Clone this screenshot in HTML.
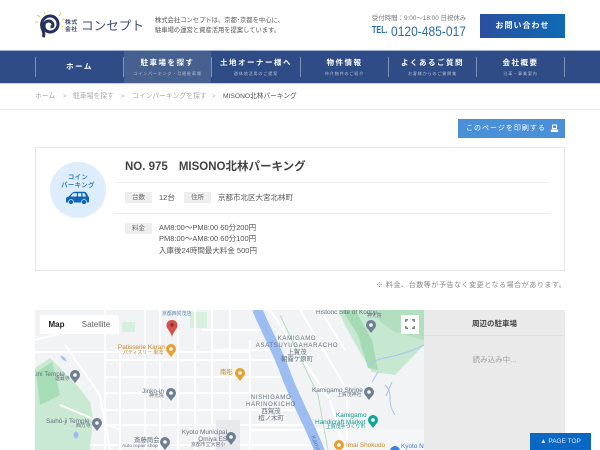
<!DOCTYPE html>
<html lang="ja">
<head>
<meta charset="utf-8">
<title>MISONO北林パーキング</title>
<style>
html,body{margin:0;padding:0;width:600px;height:450px;overflow:hidden;background:#fff}
body{position:relative;font-family:"Liberation Sans","Noto Sans CJK JP",sans-serif;color:#444}
.a{position:absolute;white-space:nowrap}
.nav{left:0;top:50px;width:600px;height:34px;background:#2f4c86;border-top:1px solid #9fb2d0;border-bottom:1px solid #c5cfdf;box-sizing:border-box}
.dv{position:absolute;top:57px;width:1px;height:20px;background:#7d92b8}
.n1{position:absolute;text-align:center;color:#fff;font-size:7.5px;font-weight:bold;letter-spacing:1.5px;line-height:10px;top:58px}
.n2{position:absolute;text-align:center;color:#b9c5da;font-size:4px;letter-spacing:.9px;line-height:5px;top:71px}
.tag{position:absolute;background:#eee;color:#666;font-size:6.5px;text-align:center;line-height:11px;height:11px;width:27px}
.t{position:absolute;font-size:7.5px;color:#555;white-space:nowrap;line-height:11px}
.m{position:absolute;white-space:nowrap;text-align:center;line-height:1.1}
.g{color:#66727f}.o{color:#c8872c}.e{color:#129a8f}
.s6{font-size:6.4px}.s5{font-size:4.9px}
.c{width:0;display:flex;justify-content:center;line-height:7px}
</style>
</head>
<body>
<!-- logo -->
<svg class="a" style="left:34px;top:11px" width="34" height="28" viewBox="0 0 34 28">
<g stroke="#ecd64c" stroke-width="1.2" fill="none"><path d="M1 11h3M3 4l3 2M10 1l1 2M27 2l-2 3M31 8l-3 1M29 16l-2-1"/></g>
<path d="M9 26C11 23 9 20 8 17C6 10 11 5 16 5C21 5 24 9 24 13C24 18 20 21 16 21C12 21 10 18 10 15C10 12 12 10 15 10C17 10 19 12 19 14C19 15.500 18 16 16.500 16" fill="none" stroke="#27305f" stroke-width="3"/>
</svg>
<div class="a" style="left:65px;top:20px;font-size:5.8px;line-height:6.5px;letter-spacing:.6px;font-weight:bold;color:#3b4a6b">株式<br>会社</div>
<div class="a" style="left:81px;top:17px;font-size:12.6px;line-height:18px;color:#3d4f70">コンセプト</div>
<div class="a" style="left:155px;top:16px;font-size:6.3px;line-height:10px;color:#555">株式会社コンセプトは、京都･京都を中心に、<br>駐車場の運営と資産活用を提案しています。</div>
<div class="a" style="left:372px;top:14px;font-size:6.4px;line-height:9px;color:#777">受付時間：9:00～18:00 日祝休み</div>
<div class="a" style="left:372px;top:25px;font-size:10px;line-height:12px;font-weight:bold;color:#2a6cae;transform:scaleX(.72);transform-origin:0 0">TEL.</div>
<div class="a" style="left:391px;top:22px;font-size:14px;line-height:18px;color:#2a6cae;transform:scaleX(.86);transform-origin:0 0">0120-485-017</div>
<div class="a" style="left:480px;top:14px;width:85px;height:24px;background:linear-gradient(90deg,#2a4fa0,#0f6ab4);color:#fff;font-size:8px;font-weight:bold;line-height:24px;text-align:center;letter-spacing:1px">お問い合わせ</div>

<!-- nav -->
<div class="a nav"></div>
<div class="a" style="left:124px;top:51px;width:87px;height:32px;background:#46608f"></div>
<i class="dv" style="left:35px"></i><i class="dv" style="left:123px"></i><i class="dv" style="left:211px"></i><i class="dv" style="left:300px"></i><i class="dv" style="left:388px"></i><i class="dv" style="left:476px"></i><i class="dv" style="left:564px"></i>
<div class="n1" style="left:36px;width:87px;top:62px">ホーム</div>
<div class="n1" style="left:124px;width:87px">駐車場を探す</div><div class="n2" style="left:124px;width:87px">コインパーキング・月極駐車場</div>
<div class="n1" style="left:212px;width:88px">土地オーナー様へ</div><div class="n2" style="left:212px;width:88px">遊休地活用のご提案</div>
<div class="n1" style="left:301px;width:87px">物件情報</div><div class="n2" style="left:301px;width:87px">仲介物件のご紹介</div>
<div class="n1" style="left:389px;width:87px">よくあるご質問</div><div class="n2" style="left:389px;width:87px">お客様からのご質問集</div>
<div class="n1" style="left:477px;width:87px">会社概要</div><div class="n2" style="left:477px;width:87px">沿革・事業案内</div>

<!-- breadcrumb -->
<div class="a" style="left:35px;top:92px;font-size:6.8px;line-height:10px;color:#aaa">ホーム</div>
<div class="a" style="left:63px;top:92px;font-size:6px;line-height:10px;color:#aaa">&gt;</div>
<div class="a" style="left:73px;top:92px;font-size:6.8px;line-height:10px;color:#aaa">駐車場を探す</div>
<div class="a" style="left:121px;top:92px;font-size:6px;line-height:10px;color:#aaa">&gt;</div>
<div class="a" style="left:132px;top:92px;font-size:6.8px;line-height:10px;color:#aaa">コインパーキングを探す</div>
<div class="a" style="left:212px;top:92px;font-size:6px;line-height:10px;color:#aaa">&gt;</div>
<div class="a" style="left:223px;top:92px;font-size:6.7px;line-height:10px;color:#555">MISONO北林パーキング</div>
<div class="a" style="left:0;top:109px;width:600px;height:1px;background:#eee"></div>

<!-- print -->
<div class="a" style="left:458px;top:119px;width:107px;height:19px;background:#4a90d9;color:#fff;font-size:7px;line-height:19px;letter-spacing:1px;padding-left:8px;box-sizing:border-box">このページを印刷する</div>
<svg class="a" style="left:550px;top:124px" width="9" height="9" viewBox="0 0 9 9"><path d="M2.500 1h4v3.500h-4z" fill="none" stroke="#fff"/><path d="M.8 5.500h7.400V8H.8z" fill="#fff"/></svg>

<!-- card -->
<div class="a" style="left:35px;top:147px;width:530px;height:124px;border:1px solid #e6e6e6;box-sizing:border-box"></div>
<div class="a" style="left:50px;top:162px;width:56px;height:56px;border-radius:50%;background:#deedfb"></div>
<div class="a" style="left:50px;top:174px;width:56px;text-align:center;font-size:6.4px;line-height:8px;font-weight:bold;color:#3d7dbd;letter-spacing:.4px">コイン<br>パーキング</div>
<svg class="a" style="left:65px;top:191px" width="25" height="14" viewBox="0 0 25 14"><path d="M1 7.500C1 6.500 2 6 3.500 5.700L7 2C8 1 9 .8 11 .8H19C20.500 .8 21 1.300 21.700 2.300L24 6.500V10.500C24 11.200 23.500 11.500 23 11.500H1.800C1.200 11.500 1 11 1 10.500z" fill="#0f65b8"/><path d="M8 2.300h3.800v3.200H5.600zM13 2.300h3.300v3.200H13zM17.500 2.300h2l1.700 3.200h-3.700z" fill="#deedfb"/><circle cx="6" cy="11" r="2.500" fill="#0f65b8" stroke="#deedfb" stroke-width=".7"/><circle cx="19" cy="11" r="2.500" fill="#0f65b8" stroke="#deedfb" stroke-width=".7"/></svg>
<div class="a" style="left:125px;top:159px;font-size:11.5px;line-height:16px;font-weight:bold;color:#444"><span>NO. 975</span><span style="margin-left:11px">MISONO北林パーキング</span></div>
<div class="a" style="left:115px;top:182px;width:435px;height:1px;background:#eee"></div>
<div class="a" style="left:115px;top:213px;width:435px;height:1px;background:#eee"></div>
<div class="tag" style="left:125px;top:192px">台数</div>
<div class="t" style="left:159px;top:192px">12台</div>
<div class="tag" style="left:184px;top:192px">住所</div>
<div class="t" style="left:218px;top:192px">京都市北区大宮北林町</div>
<div class="tag" style="left:125px;top:223px">料金</div>
<div class="t" style="left:159px;top:222px">AM8:00～PM8:00 60分200円</div>
<div class="t" style="left:159px;top:233px">PM8:00～AM8:00 60分100円</div>
<div class="t" style="left:159px;top:245px">入庫後24時間最大料金 500円</div>
<div class="a" style="left:376px;top:281px;font-size:7px;line-height:10px;color:#888;letter-spacing:.55px">※ 料金、台数等が予告なく変更となる場合があります。</div>

<!-- map -->
<svg class="a" style="left:35px;top:310px" width="389" height="140" viewBox="35 310 389 140">
<rect x="35" y="310" width="389" height="140" fill="#f1f3f4"/>
<path d="M35 368L50 358L77 385L90 402L93 418L90 450H35z" fill="#c9e9d2"/>
<path d="M36 372L52 362L60 395L40 405z" fill="#a6dcb6"/>
<path d="M338 310H424V345L395 375L372 372L360 352L345 325z" fill="#c6e8d0"/>
<path d="M342 310L358 335L368 368L378 370L372 340L355 310z" fill="#a4dab4"/>
<path d="M375 310H424V340L395 332L380 322z" fill="#b2e0bf"/>
<path d="M122 322H135V332H122zM190 312H207V328H190z" fill="#d7efdd"/>
<path d="M210 430H424V450H200z" fill="#f5f6f7"/>
<g fill="none" stroke="#fff" stroke-width="2">
<path d="M35 340L105 322 M105 310V450M120 345V450M145 310V450M160 310V450M178 310V450M195 310V450M212 310V450M230 310V450M250 340V450"/>
<path d="M35 352H250M105 360H285M105 377H290M105 393H300M105 410H310M100 425H312M90 445H320"/>
<path d="M65 345L100 395L110 450M60 405L120 430"/>
<path d="M270 310L330 400L345 450M300 310L347 390V450M320 310L345 350"/>
<path d="M202 330H268M212 350H280M250 430H330"/>
</g>
<path d="M280 315L318 395L328 450" fill="none" stroke="#b9dfc4" stroke-width="1"/>
<path d="M257 309C268 335 278 352 285 372C296 402 310 425 320 452" fill="none" stroke="#9cbcf2" stroke-width="10"/>
<path d="M378 372L372 382M370 365C378 355 395 360 424 345M385 385C395 395 385 400 395 415M392 382L386 396" fill="none" stroke="#a9c4f2" stroke-width="1"/>
<path d="M60 355l5 3 2 4-5-3z" fill="#9cbcf2"/><ellipse cx="76" cy="435" rx="2.500" ry="3.500" fill="#9cbcf2"/>
<rect x="216" y="420" width="24" height="30" fill="#e8e9ec"/>
<path d="M172 320c-3.500 0-5.500 2.500-5.500 5 0 4 4 6 5.500 12 1.500-6 5.500-8 5.500-12 0-2.500-2-5-5.500-5z" fill="#d5504a"/><circle cx="172" cy="325" r="1.600" fill="#8a2a26"/>
<g>
<circle cx="171" cy="349" r="5" fill="#e8a12f"/><path d="M171 357l-3.800-5h7.600z" fill="#e8a12f"/>
<circle cx="75" cy="375" r="5" fill="#6e7f92"/><path d="M75 383l-3.800-5h7.600z" fill="#6e7f92"/>
<circle cx="171" cy="393" r="5" fill="#6e7f92"/><path d="M171 401l-3.800-5h7.600z" fill="#6e7f92"/>
<circle cx="97" cy="423" r="5" fill="#6e7f92"/><path d="M97 431l-3.800-5h7.600z" fill="#6e7f92"/>
<circle cx="165" cy="442" r="5" fill="#6e7f92"/><path d="M165 450l-3.800-5h7.600z" fill="#6e7f92"/>
<circle cx="231" cy="437" r="5" fill="#6e7f92"/><path d="M231 445l-3.800-5h7.600z" fill="#6e7f92"/>
<circle cx="240" cy="373" r="5" fill="#e8a12f"/><path d="M240 381l-3.800-5h7.600z" fill="#e8a12f"/>
<circle cx="371" cy="325" r="5" fill="#6e7f92"/><path d="M371 333l-3.800-5h7.600z" fill="#6e7f92"/>
<circle cx="369" cy="392" r="5" fill="#6e7f92"/><path d="M369 400l-3.800-5h7.600z" fill="#6e7f92"/>
<circle cx="373" cy="420" r="5" fill="#12a59a"/><path d="M373 428l-3.800-5h7.600z" fill="#12a59a"/>
<circle cx="339" cy="445" r="5" fill="#e8a12f"/>
<circle cx="395" cy="451" r="5" fill="#3d7de0"/>
</g>
<g fill="#fff"><circle cx="171" cy="349" r="1.800"/><circle cx="75" cy="375" r="1.800"/><circle cx="171" cy="393" r="1.800"/><circle cx="97" cy="423" r="1.800"/><circle cx="165" cy="442" r="1.800"/><circle cx="231" cy="437" r="1.800"/><circle cx="240" cy="373" r="1.800"/><circle cx="371" cy="325" r="1.800"/><circle cx="369" cy="392" r="1.800"/><circle cx="373" cy="420" r="1.800"/><circle cx="339" cy="445" r="1.800"/></g>
</svg>
<div class="a" style="left:35px;top:310px;width:389px;height:140px;overflow:hidden">
<div class="m o s6" style="left:83px;top:34px">Patisserie Karan</div>
<div class="m o s5" style="left:88px;top:41px">パティスリー 果凛</div>
<div class="m o s6" style="left:185px;top:59px">南彤</div>
<div class="m g s6" style="left:-1px;top:61px">uni Temple</div>
<div class="m g s5" style="left:20px;top:67px">退蔵寺</div>
<div class="m g s6" style="left:107px;top:78px">Jinko-in</div>
<div class="m g s5" style="left:114px;top:84px">神光院</div>
<div class="m g s6" style="left:11px;top:108px">Saihō-ji Temple</div>
<div class="m g s5" style="left:41px;top:114px">西方寺</div>
<div class="m g s6" style="left:99px;top:127px">斎藤商会</div>
<div class="m g s5" style="left:87px;top:134px">Auto repair shop</div>
<div class="m g s6" style="left:144px;top:120px;width:48px;text-align:right;line-height:6.500px">Kyoto Municipal<br>Omiya ES</div>
<div class="m g s5" style="left:156px;top:133px">京都市立大宮小</div>
<div class="m s5" style="left:127px;top:2px;color:#5f8ec0">京都西賀茂店</div>
<div class="m g c" style="left:262px;top:26px;font-size:6px;letter-spacing:.7px"><span style="text-align:center">KAMIGAMO<br>ASATSUYUGAHARACHO</span></div>
<div class="m g c" style="left:262px;top:39px;font-size:6.4px"><span style="text-align:center">上賀茂<br>朝霧ケ原町</span></div>
<div class="m g c" style="left:236px;top:85px;font-size:6px;letter-spacing:.7px"><span style="text-align:center">NISHIGAMO<br>HARINOKICHO</span></div>
<div class="m g c" style="left:236px;top:98px;font-size:6.4px"><span style="text-align:center">西賀茂<br>榿ノ木町</span></div>
<div class="m g s6" style="left:281px;top:-1px">Historic Site of Kodoji</div>
<div class="m g s5" style="left:332px;top:4px">神光院</div>
<div class="m g s6" style="left:277px;top:77px">Kamigamo Shrine</div>
<div class="m g s5" style="left:302px;top:83px">上賀茂神社</div>
<div class="m e s6" style="left:301px;top:102px">Kamigamo</div>
<div class="m e s6" style="left:280px;top:109px">Handicraft Market</div>
<div class="m e s5" style="left:291px;top:115px">上賀茂手づくり市</div>
<div class="m o s6" style="left:311px;top:132px">Imai Shokudo</div>
<div class="m s6" style="left:366px;top:133px;color:#3d7de0">Kyoto N</div>
<div class="m s6" style="left:272px;top:130px;color:#5b7fc0;transform:rotate(68deg)">Kamo</div>
</div>
<div class="a" style="left:40px;top:315px;width:79px;height:19px;background:#fff"></div>
<div class="a" style="left:40px;top:315px;width:33px;height:19px;font-size:8px;font-weight:bold;color:#222;line-height:19px;text-align:center">Map</div>
<div class="a" style="left:73px;top:315px;width:46px;height:19px;font-size:8px;color:#666;line-height:19px;text-align:center">Satellite</div>
<div class="a" style="left:401px;top:315px;width:18px;height:19px;background:#fff"></div>
<svg class="a" style="left:405px;top:319px" width="10" height="10" viewBox="0 0 10 10"><path d="M.8 3V.8H3M7 .8h2.200V3M9.200 7v2.200H7M3 9.200H.8V7" fill="none" stroke="#555" stroke-width="1.100"/></svg>

<!-- side panel -->
<div class="a" style="left:424px;top:310px;width:141px;height:140px;background:#eaeaea"></div>
<div class="a" style="left:424px;top:335px;width:141px;height:1px;background:#e0e0e0"></div>
<div class="a" style="left:424px;top:318px;width:141px;text-align:center;font-size:7.500px;line-height:12px;font-weight:bold;color:#444">周辺の駐車場</div>
<div class="a" style="left:424px;top:354px;width:141px;text-align:center;font-size:7.500px;line-height:12px;color:#a0a0a0">読み込み中...</div>
<div class="a" style="left:530px;top:433px;width:61px;height:17px;background:#0a68c4;color:#dfeafa;font-size:6.500px;line-height:17px;text-align:center">▲ PAGE TOP</div>
</body>
</html>
